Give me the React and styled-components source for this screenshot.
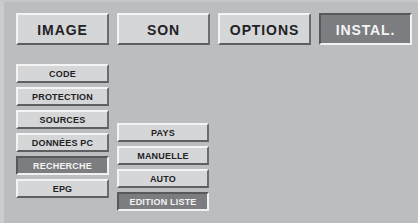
import React from "react";
import styled, { createGlobalStyle } from "styled-components";

const GlobalStyle = createGlobalStyle`
  html, body {
    margin: 0;
    padding: 0;
    background: #bcbdc1;
  }
`;

const tabs = ["IMAGE", "SON", "OPTIONS", "INSTAL."];
const leftItems = ["CODE", "PROTECTION", "SOURCES", "DONNÉES PC", "RECHERCHE", "EPG"];
const rightItems = ["PAYS", "MANUELLE", "AUTO", "EDITION LISTE"];

const App = () => {
  return (
    <>
      <GlobalStyle />
      <Screen>
        <TabBar>
          {tabs.map((t) => (
            <Tab key={t} active={t === "INSTAL."}>
              {t}
            </Tab>
          ))}
        </TabBar>
        <Content>
          <Column>
            {leftItems.map((t) => (
              <Item key={t} active={t === "RECHERCHE"}>
                {t}
              </Item>
            ))}
          </Column>
          <SubColumn>
            {rightItems.map((t) => (
              <Item key={t} active={t === "EDITION LISTE"}>
                {t}
              </Item>
            ))}
          </SubColumn>
        </Content>
      </Screen>
    </>
  );
};

//Styled Components
const Screen = styled.div`
  width: 418px;
  height: 223px;
  box-sizing: border-box;
  background: #bcbdc1;
  border-left: 4px solid #cbcccf;
  border-top: 2px solid #c6c7ca;
  padding: 11px 0 0 12px;
  font-family: "Liberation Sans", Arial, sans-serif;
  overflow: hidden;
`;

const TabBar = styled.div`
  display: flex;
  gap: 8px;
`;

const Bevel = styled.div`
  box-sizing: border-box;
  display: flex;
  align-items: center;
  justify-content: center;
  font-weight: bold;
  white-space: nowrap;
  background: ${(p) => (p.active ? "#7c7d80" : "#d5d6d8")};
  color: ${(p) => (p.active ? "#f4f4f4" : "#222224")};
  border-style: solid;
  border-color: ${(p) =>
    p.active
      ? "#58595c #f2f2f2 #f2f2f2 #58595c"
      : "#f4f4f5 #6c6d70 #5e5f62 #f4f4f5"};
`;

const Tab = styled(Bevel)`
  width: 93px;
  height: 32px;
  border-width: 2px;
  font-size: 14px;
  letter-spacing: 0.9px;
  padding-top: 1px;
`;

const Content = styled.div`
  display: flex;
  align-items: flex-start;
  gap: 8px;
  margin-top: 19px;
`;

const Column = styled.div`
  display: flex;
  flex-direction: column;
  gap: 4px;
  width: 93px;
`;

const SubColumn = styled(Column)`
  width: 92px;
  margin-top: 59px;
`;

const Item = styled(Bevel)`
  height: 19px;
  border-width: 2px;
  font-size: 9px;
  letter-spacing: 0.2px;
`;

export default App;
